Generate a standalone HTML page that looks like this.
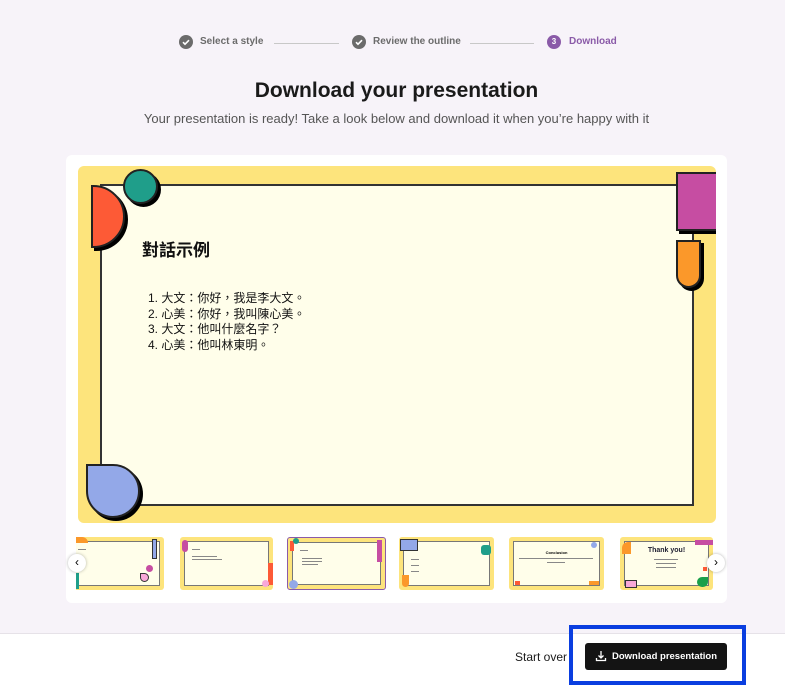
<!DOCTYPE html>
<html><head><meta charset="utf-8"><style>
*{margin:0;padding:0;box-sizing:border-box}
body{width:785px;height:686px;background:#f7f3f9;font-family:"Liberation Sans","Noto Sans CJK TC",sans-serif;position:relative;overflow:hidden}
.a{position:absolute}
.step{font-size:10px;color:#6b6b6b;font-weight:bold;top:36px}
.chk{width:14px;height:14px;border-radius:50%;background:#6b6b6b;top:35px}
.line{height:1px;background:#c8c8c8;top:43px}
.th{position:absolute;top:0;height:53px;background:#fde47c;border-radius:3px}
.th i{position:absolute;left:4px;top:4px;right:4px;bottom:4px;background:#fffeea;border:1px solid #777}
.th b{position:absolute;height:1px;background:#888}
.sh{position:absolute;border:2px solid #222;box-shadow:3px 3px 0 #000}
</style></head><body>
<div class="a chk" style="left:179px"><svg width="14" height="14"><path d="M4 7.2l2 2 4-4" stroke="#fff" stroke-width="1.6" fill="none"/></svg></div>
<div class="a step" style="left:200px">Select a style</div>
<div class="a line" style="left:274px;width:65px"></div>
<div class="a chk" style="left:352px"><svg width="14" height="14"><path d="M4 7.2l2 2 4-4" stroke="#fff" stroke-width="1.6" fill="none"/></svg></div>
<div class="a step" style="left:373px">Review the outline</div>
<div class="a line" style="left:470px;width:64px"></div>
<div class="a" style="left:547px;top:35px;width:14px;height:14px;border-radius:50%;background:#8a5aa8;color:#fff;font-size:8px;font-weight:bold;text-align:center;line-height:14px">3</div>
<div class="a step" style="left:569px;color:#8a5aa8">Download</div>
<div class="a" style="left:0;width:793px;top:79px;text-align:center;font-size:21px;font-weight:bold;color:#1a1a1a">Download your presentation</div>
<div class="a" style="left:0;width:793px;top:111px;text-align:center;font-size:13px;color:#555">Your presentation is ready! Take a look below and download it when you’re happy with it</div>
<div class="a" style="left:66px;top:155px;width:661px;height:448px;background:#fff;border-radius:6px"></div>
<div class="a" style="left:78px;top:166px;width:638px;height:357px;background:#fde47c;border-radius:6px;overflow:hidden">
 <div class="a" style="left:22px;top:18px;width:594px;height:322px;background:#fffeea;border:2px solid #333"></div>
 <div class="sh" style="left:13px;top:19px;width:34px;height:63px;background:#fd5a36;border-radius:0 32px 32px 0"></div>
 <div class="sh" style="left:45px;top:3px;width:35px;height:35px;background:#1f9e8a;border-radius:50%"></div>
 <div class="sh" style="left:598px;top:6px;width:44px;height:59px;background:#c64da2"></div>
 <div class="sh" style="left:598px;top:74px;width:25px;height:48px;background:#fb982a;border-radius:0 0 13px 13px"></div>
 <div class="sh" style="left:8px;top:298px;width:54px;height:54px;background:#93a8e8;border-radius:0 27px 27px 27px"></div>
 <div class="a" style="left:64px;top:70px;font-size:17px;font-weight:bold;color:#111">對話示例</div>
 <div class="a" style="left:70px;top:125px;font-size:12px;line-height:15.5px;color:#111">1. 大文：你好，我是李大文。<br>2. 心美：你好，我叫陳心美。<br>3. 大文：他叫什麼名字？<br>4. 心美：他叫林東明。</div>
</div>
<div class="a" style="left:76px;top:537px;width:640px;height:54px;overflow:hidden">
<div class="th" style="left:-6px;width:94px"><i></i><b style="left:8px;top:12px;width:8px"></b><b style="left:8px;top:19px;width:4px"></b><div class="a" style="left:6px;top:0;width:12px;height:6px;background:#fb982a;border-radius:0 6px 0 0"></div><div class="a" style="left:82px;top:2px;width:5px;height:20px;background:#93a8e8;border:1px solid #333"></div><div class="a" style="left:76px;top:28px;width:7px;height:7px;border-radius:50%;background:#c64da2"></div><div class="a" style="left:70px;top:36px;width:9px;height:9px;border-radius:0 5px 5px 5px;background:#f8a8d8;border:1px solid #333"></div><div class="a" style="left:6px;top:36px;width:3px;height:16px;background:#1f9e8a"></div></div>
<div class="th" style="left:104px;width:93px"><i></i><b style="left:12px;top:12px;width:8px"></b><b style="left:12px;top:19px;width:25px"></b><b style="left:12px;top:22px;width:30px"></b><div class="a" style="left:2px;top:3px;width:6px;height:12px;border-radius:3px;background:#c64da2"></div><div class="a" style="left:88px;top:26px;width:5px;height:22px;background:#fd5a36"></div><div class="a" style="left:82px;top:43px;width:7px;height:7px;border-radius:50%;background:#f8a8d8"></div></div>
<div class="th" style="left:211px;width:99px;border:1.5px solid #8a5aa8"><i></i><b style="left:12px;top:12px;width:8px"></b><b style="left:14px;top:20px;width:20px"></b><b style="left:14px;top:23px;width:20px"></b><b style="left:14px;top:26px;width:16px"></b><div class="a" style="left:2px;top:3px;width:4px;height:10px;background:#fd5a36"></div><div class="a" style="left:5px;top:0;width:6px;height:6px;border-radius:50%;background:#1f9e8a"></div><div class="a" style="left:89px;top:2px;width:5px;height:22px;background:#c64da2"></div><div class="a" style="left:1px;top:42px;width:9px;height:9px;border-radius:50%;background:#93a8e8"></div></div>
<div class="th" style="left:323px;width:95px"><i></i><b style="left:12px;top:22px;width:8px"></b><b style="left:12px;top:28px;width:8px"></b><b style="left:12px;top:34px;width:8px"></b><div class="a" style="left:1px;top:2px;width:18px;height:12px;background:#93a8e8;border:1px solid #333"></div><div class="a" style="left:82px;top:8px;width:10px;height:10px;border-radius:3px;background:#1f9e8a"></div><div class="a" style="left:3px;top:38px;width:7px;height:12px;border-radius:0 0 6px 6px;background:#fb982a"></div></div>
<div class="th" style="left:433px;width:95px"><i></i><div class="a" style="left:0;top:13px;width:95px;text-align:center;font-size:4px;font-weight:bold">Conclusion</div><b style="left:10px;top:21px;width:74px"></b><b style="left:38px;top:25px;width:18px"></b><div class="a" style="left:82px;top:5px;width:6px;height:6px;border-radius:50%;background:#93a8e8"></div><div class="a" style="left:80px;top:44px;width:10px;height:4px;background:#fb982a"></div><div class="a" style="left:6px;top:44px;width:5px;height:4px;background:#fd5a36"></div></div>
<div class="th" style="left:544px;width:93px"><i></i><div class="a" style="left:0;top:10px;width:93px;text-align:center;font-size:7px;font-weight:bold;color:#223">Thank you!</div><b style="left:34px;top:22px;width:24px"></b><b style="left:36px;top:26px;width:20px"></b><b style="left:36px;top:30px;width:20px"></b><div class="a" style="left:75px;top:3px;width:18px;height:5px;background:#c64da2"></div><div class="a" style="left:2px;top:5px;width:9px;height:12px;border-radius:6px 0 0 0;background:#fb982a"></div><div class="a" style="left:5px;top:43px;width:12px;height:8px;background:#f8a8d8;border:1px solid #333"></div><div class="a" style="left:77px;top:40px;width:11px;height:10px;border-radius:5px 0 5px 5px;background:#1aa04a"></div><div class="a" style="left:83px;top:30px;width:4px;height:4px;background:#fd5a36"></div></div>
</div>
<div class="a" style="left:68px;top:554px;width:18px;height:18px;border-radius:50%;background:#fff;box-shadow:0 0 3px rgba(0,0,0,.3);text-align:center;font-size:12px;line-height:17px">‹</div>
<div class="a" style="left:707px;top:554px;width:18px;height:18px;border-radius:50%;background:#fff;box-shadow:0 0 3px rgba(0,0,0,.3);text-align:center;font-size:12px;line-height:17px">›</div>
<div class="a" style="left:0;top:633px;width:785px;height:53px;background:#fff;border-top:1px solid #e6e2e8"></div>
<div class="a" style="left:515px;top:650px;font-size:12px;color:#1a1a1a">Start over</div>
<div class="a" style="left:569px;top:625px;width:177px;height:60px;border:4px solid #0a3ee0"></div>
<div class="a" style="left:585px;top:643px;width:142px;height:27px;background:#141414;border-radius:3px;color:#fff;font-size:9.5px;font-weight:bold;line-height:27px;padding-left:27px">Download presentation</div>
<svg class="a" style="left:595px;top:650px" width="12" height="12"><path d="M6 1v7M3.5 5.5L6 8l2.5-2.5M1.5 8v2.5h9V8" stroke="#fff" stroke-width="1.3" fill="none"/></svg>
</body></html>
